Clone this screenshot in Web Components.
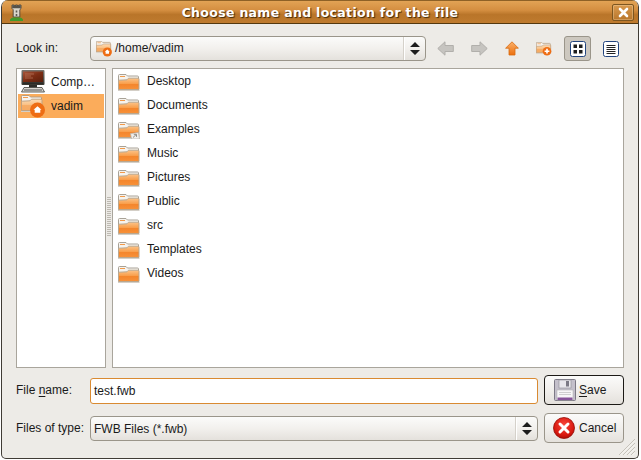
<!DOCTYPE html>
<html><head><meta charset="utf-8"><style>
html,body{margin:0;padding:0;background:#fff;}
body{font:12px "Liberation Sans",sans-serif;color:#1a1a1a;width:641px;height:460px;overflow:hidden}
</style></head><body>
<x-window heading="Choose name and location for the file">
  <x-row>
    <x-label w="74" style="padding-bottom:2px">Look in:</x-label>
    <x-combo w="336" h="25" path><x-folder slot="icon" kind="small"></x-folder><span style="padding-bottom:2px">/home/vadim</span></x-combo>
    <x-toolbar></x-toolbar>
  </x-row>
  <x-panes></x-panes>
  <x-form></x-form>
</x-window>
<script>
let uid=0;
/* Base folder drawn in a 22x17 box; `pale` is the tinted variant */
const folderBody=(pale)=>{
  const id='f'+(++uid);
  const stops=pale
    ?'<stop offset="0" stop-color="#fddcb6"/><stop offset=".5" stop-color="#f9c084"/><stop offset=".56" stop-color="#f6ac66"/><stop offset="1" stop-color="#f6aa62"/>'
    :'<stop offset="0" stop-color="#fcc48a"/><stop offset=".48" stop-color="#f99f4c"/><stop offset=".56" stop-color="#f4862c"/><stop offset="1" stop-color="#f7923a"/>';
  return `<defs><linearGradient id="${id}" x1="0" y1="0" x2="0" y2="1">${stops}</linearGradient></defs>
  <path d="M.5 15V1.500Q.5.5 1.500.5H8L9.500 2H19.500Q20.500 2 20.500 3V15Z" fill="#f6f3ee" stroke="${pale?'#b59c80':'#a8a297'}"/>
  <path d="M2 2.500h5" stroke="#f29a4a" stroke-width="1"/>
  <path d="M.5 15.500V7Q.5 6.200 1.300 6.200L9 5.800 10.500 4.200H20Q21 4.200 21 5.200V15.500Z" fill="url(#${id})" stroke="${pale?'#c0a282':'#b9a78f'}" stroke-width="1"/>
  <path d="M0 16.500h21.500" stroke="#d4cfc7" stroke-width="1"/>`;
};
const FOLDERS={
  plain:()=>`<svg width="22" height="17" viewBox="0 0 22 17">${folderBody(false)}</svg>`,
  link:()=>`<svg width="22" height="17" viewBox="0 0 22 17">${folderBody(false)}<path d="M12.500 11.500l8-1 1 6.500h-8z" fill="#f1efec" stroke="#b5b2ac" stroke-width=".7"/><path d="M15 15.500l3-2.800M15.800 12.300h2.700v2.600" stroke="#8f8c86" fill="none" stroke-width="1"/></svg>`,
  home:()=>`<svg width="24" height="24" viewBox="0 0 24 24"><g transform="translate(0 1)">${folderBody(true)}</g><circle cx="16.500" cy="16" r="7.500" fill="#ee6d14"/><path d="M16.500 12.200l-4 3.500h1.200v3h5.600v-3h1.200z" fill="#fff"/></svg>`,
  small:()=>`<svg width="18" height="16" viewBox="0 0 18 16"><g transform="scale(.7)">${folderBody(true)}</g><circle cx="11.300" cy="11" r="4.600" fill="#ee6d14"/><path d="M11.300 8.600l-2.500 2.200h.8v1.900h3.400v-1.900h.8z" fill="#fff"/></svg>`,
  add:()=>`<svg width="16" height="14" viewBox="0 0 16 14"><g transform="scale(.7)">${folderBody(true)}</g><circle cx="11" cy="9.200" r="4.300" fill="#ee6d14"/><path d="M11 6.800v4.800M8.600 9.200h4.800" stroke="#fff" stroke-width="1.600"/></svg>`
};
function def(name,html){customElements.define(name,class extends HTMLElement{
  connectedCallback(){ if(this.shadowRoot)return; const r=this.attachShadow({mode:'open'}); r.innerHTML=typeof html==='function'?html(this):html;}
});}
def('x-folder',el=>{const k=el.getAttribute('kind')||'plain';
  return `<style>:host{display:inline-flex;flex:none;${k==='plain'||k==='link'?'margin-top:2px;':''}}svg{display:block}</style>${FOLDERS[k]()}`});
def('x-window',el=>`<style>
 :host{display:flex;flex-direction:column;width:638px;height:459px;margin-left:1px;box-sizing:border-box;position:relative;background:#edebe7;
  border:1px solid #3f3b35;border-top:0;border-radius:7px 7px 5px 5px;overflow:hidden}
 .bar{height:24px;box-sizing:border-box;flex:none;display:flex;align-items:center;justify-content:center;position:relative;
  background:linear-gradient(#e2a355 0,#d48e40 42%,#b97529 62%,#bf7b2f 100%);border-top:1px solid #8e6126;border-bottom:1px solid #54380f;
  color:#fff;font:bold 12.5px "DejaVu Sans",sans-serif;letter-spacing:.32px;text-shadow:1px 1px 1px #3f2808}
 .tower{position:absolute;left:7px;top:3px}
 .close{position:absolute;right:4px;top:3px;width:22px;height:17px;box-sizing:border-box;border:1px solid #7d5620;border-radius:2px;background:linear-gradient(#d8994e,#b9772c);box-shadow:inset 0 0 0 1px rgba(255,235,200,.3);display:flex;align-items:center;justify-content:center}
 .body{flex:1;display:flex;flex-direction:column;padding:12px 14px 15px 14px;min-height:0}
 .grip{position:absolute;right:3px;bottom:3px}
 </style>
 <div class="bar">
  <svg class="tower" width="15" height="18" viewBox="0 0 15 18"><path d="M3 1h2.200v1.500H6.500V1h2v1.500h1.300V1H12v3.500l-1.200 1.200V13H4.200V5.700L3 4.500z" fill="#d9d6cb" stroke="#3b3a32" stroke-width=".8"/><path d="M3.200 1.300h8.600v3H3.200z" fill="#55524a"/><path d="M6.700 6.500h1.600v2H6.700zM6.700 10h1.600v2H6.700z" fill="#5b5a52"/><path d="M1 15.500q2-2.500 3.500-2h6q2-.5 3.500 2v1.500H1z" fill="#3f9a2c"/></svg>
  <span>${el.getAttribute('heading')}</span>
  <div class="close"><svg width="11" height="11" viewBox="0 0 11 11"><path d="M2 2l7 7M9 2L2 9" stroke="#fff" stroke-width="2.600" stroke-linecap="round"/></svg></div>
 </div>
 <div class="body"><slot></slot></div>
 <svg class="grip" width="17" height="17" viewBox="0 0 17 17"><path d="M17 1L1 17M17 5L5 17M17 9L9 17M17 13L13 17" stroke="#c6c2ba" stroke-width="1"/><path d="M17 2.500L2.500 17M17 6.500L6.500 17M17 10.500L10.500 17M17 14.500L14.500 17" stroke="#fbfaf8" stroke-width=".8"/></svg>`);
def('x-row',`<style>:host{display:flex;align-items:center;height:25px;flex:none}</style><slot></slot>`);
def('x-label',el=>`<style>:host{display:block;flex:none;${el.getAttribute('w')?'width:'+el.getAttribute('w')+'px;':''}color:#1a1a1a;box-sizing:border-box}u{text-underline-offset:2px}</style><slot></slot>`);
def('x-combo',el=>`<style>
 :host{display:flex;flex:none;align-items:center;box-sizing:border-box;width:${el.getAttribute('w')}px;height:${el.getAttribute('h')}px;border:1px solid #9a958a;border-radius:4px;background:linear-gradient(#fbfbfa 0,#f2f0ed 50%,#e4e1dc 100%);padding-left:${el.hasAttribute('path')?'5px':'3px'}}
 .t{flex:1;display:flex;align-items:center;gap:1px}
 .sep{width:1px;align-self:stretch;background:#d5d1ca;box-shadow:1px 0 0 #fff}
 .arr{width:21px;display:flex;justify-content:center}
 </style><span class="t"><slot name="icon"></slot><slot></slot></span><span class="sep"></span>
 <span class="arr"><svg width="10" height="13" viewBox="0 0 10 13"><path d="M5 0L10 5H0zM5 13L0 8h10z" fill="#1d1d1d"/></svg></span>`);
const ARROW=(d)=>`<svg width="17" height="15" viewBox="0 0 17 15"><path d="${d}" fill="#c6c4c0" stroke="#b1afab" stroke-linejoin="round"/></svg>`;
def('x-toolbar',`<style>:host{display:flex;align-items:center;flex:none;height:25px}
 .i{display:flex;justify-content:center;align-items:center;height:25px;flex:none}
 .tg{width:27px;height:25px;box-sizing:border-box;border-radius:3px;display:flex;align-items:center;justify-content:center;flex:none}
 .on{background:#cdc8bf;border:1px solid #9a958a}
 svg{display:block}
 </style>
 <div class="i" style="margin-left:3px;width:33px">${ARROW('M.8 7.500L8 .8v3.700h8.300v6H8v3.700z')}</div>
 <div class="i" style="width:34px">${ARROW('M16.200 7.500L9 .8v3.700H.7v6H9v3.700z')}</div>
 <div class="i" style="width:32px"><svg width="14" height="15" viewBox="0 0 14 15"><defs><linearGradient id="up" x1="0" y1="0" x2="0" y2="1"><stop offset="0" stop-color="#fbb06a"/><stop offset="1" stop-color="#ec700e"/></linearGradient></defs><path d="M7 .8L13.400 7.200H10V14H4V7.200H.6z" fill="url(#up)" stroke="#d8690f" stroke-width=".8"/></svg></div>
 <div class="i" style="width:32px">${FOLDERS.add()}</div>
 <div class="tg on" style="margin-left:4px"><svg width="16" height="16" viewBox="0 0 16 16"><rect x=".5" y=".5" width="15" height="15" rx="2" fill="#fff" stroke="#23457f"/><rect x="3.500" y="3.500" width="3.500" height="3.500" fill="#1d1d1d"/><rect x="9" y="3.500" width="3.500" height="3.500" fill="#1d1d1d"/><rect x="3.500" y="9" width="3.500" height="3.500" fill="#1d1d1d"/><rect x="9" y="9" width="3.500" height="3.500" fill="#1d1d1d"/></svg></div>
 <div class="tg" style="margin-left:6px"><svg width="16" height="16" viewBox="0 0 16 16"><rect x=".5" y=".5" width="15" height="15" rx="2" fill="#fff" stroke="#23457f"/><path d="M3.500 4.500h9M3.500 6.500h9M3.500 8.500h9M3.500 10.500h9M3.500 12.500h9" stroke="#222"/></svg></div>`);
def('x-list',el=>`<style>:host{display:block;box-sizing:border-box;background:#fff;border:1px solid #a9a59c;width:${el.getAttribute('w')||'auto'};padding:${el.getAttribute('pad')||'0'};flex:${el.getAttribute('w')?'none':'1'}}</style><slot></slot>`);
def('x-item',el=>`<style>:host{display:flex;align-items:center;height:24px;gap:${el.getAttribute('gap')||'6px'};padding-left:${el.getAttribute('pl')||'0'};${el.hasAttribute('sel')?'background:#fbac5b;':''}white-space:nowrap}</style><slot name="i"></slot><slot></slot>`);
const C=`<svg slot="i" width="24" height="24" viewBox="0 0 24 24" style="display:block"><defs><linearGradient id="scr" x1="0" y1="0" x2="1" y2="1"><stop offset="0" stop-color="#a8563a"/><stop offset=".5" stop-color="#7c2d14"/><stop offset="1" stop-color="#5a1f0c"/></linearGradient><linearGradient id="mon" x1="0" y1="0" x2="0" y2="1"><stop offset="0" stop-color="#77746e"/><stop offset="1" stop-color="#38362f"/></linearGradient></defs><rect x=".5" y="0" width="23" height="15" rx="1" fill="url(#mon)"/><rect x="2" y="1.500" width="20" height="10.500" fill="url(#scr)"/><path d="M4 4h9M4 6h6M4 8h8" stroke="#c98a6e" stroke-width=".8" opacity=".7"/><rect x="2" y="12.500" width="20" height="1.500" fill="#2c2b27"/><rect x="8" y="15" width="8" height="2.500" fill="#2e2d29"/><path d="M3 17.500h18l2.500 4.500H.5z" fill="#d8d6d0" stroke="#3e3d38" stroke-width=".8"/><path d="M3 20h18" stroke="#555" stroke-width="1"/></svg>`;
def('x-panes',`<style>:host{display:flex;flex:1;margin-top:7px;min-height:0;position:relative;gap:6px}
 .grip{position:absolute;left:91px;top:129px;width:4px;height:40px;background:repeating-linear-gradient(#bdb9b1 0 1px,#edebe7 1px 2px)}
 </style>
 <x-list w="90px" pad="1px 1px 0 1px">
  <x-item gap="6px" pl="3px">${C}Comp…</x-item>
  <x-item sel gap="6px" pl="3px"><x-folder slot="i" kind="home"></x-folder>vadim</x-item>
 </x-list>
 <div class="grip"></div>
 <x-list pad="0 0 0 5px">
  ${[['Desktop'],['Documents'],['Examples','link'],['Music'],['Pictures'],['Public'],['src'],['Templates'],['Videos']].map(([n,k])=>`<x-item gap="7px"><x-folder slot="i" ${k?`kind="${k}"`:''}></x-folder>${n}</x-item>`).join('')}
 </x-list>`);
def('x-btn',el=>`<style>:host{display:flex;flex:none;box-sizing:border-box;width:80px;height:30px;align-items:center;gap:${el.getAttribute('gap')}px;padding-left:${el.getAttribute('pl')}px;border:1px solid ${el.hasAttribute('def')?'#1c1a16':'#9a958a'};border-radius:4px;background:linear-gradient(#fbfbfa,#f1efec 50%,#e4e1dc)}u{text-underline-offset:2px}svg{display:block}</style><slot name="i"></slot><slot></slot>`);
def('x-form',`<style>:host{display:grid;grid-template-columns:74px 448px 86px;row-gap:8px;margin-top:7px;flex:none;align-items:center}
 .e{box-sizing:border-box;height:26px;border:1px solid #d98a32;border-radius:3px;background:#fff;display:flex;align-items:center;padding-left:3px;width:448px;align-self:start;margin-top:3px}
 x-combo{align-self:start;margin-top:3px}
 x-btn{margin-left:6px}
 u{text-underline-offset:2px}
 </style>
 <x-label>File <u>n</u>ame:</x-label>
 <div class="e">test.fwb</div>
 <x-btn def pl="9" gap="3"><svg slot="i" width="22" height="22" viewBox="0 0 22 22"><rect x=".5" y=".5" width="21" height="21" rx="1" fill="#c4c0cb" stroke="#7c7985"/><rect x="5" y="1" width="12" height="8" fill="#e9e7ec" stroke="#8d8a94" stroke-width=".6"/><rect x="12" y="2" width="3" height="5.500" fill="#7c7985"/><rect x="3" y="11" width="16" height="10" fill="#f8f7f8" stroke="#aaa" stroke-width=".5"/><rect x="3.500" y="18.500" width="15" height="2.500" fill="#87569a"/><path d="M5 13.500h12M5 15.500h12" stroke="#cfcfcf"/></svg><span><u>S</u>ave</span></x-btn>
 <x-label>Files of type:</x-label>
 <x-combo w="448" h="25">FWB Files (*.fwb)</x-combo>
 <x-btn pl="8" gap="4"><svg slot="i" width="22" height="22" viewBox="0 0 22 22"><defs><radialGradient id="rd" cx=".5" cy=".35" r=".7"><stop offset="0" stop-color="#f8473b"/><stop offset=".7" stop-color="#d8180f"/><stop offset="1" stop-color="#9d0e06"/></radialGradient></defs><circle cx="11" cy="11" r="10.500" fill="url(#rd)" stroke="#940d06" stroke-width=".8"/><path d="M7 7l8 8M15 7l-8 8" stroke="#fff" stroke-width="3" stroke-linecap="round"/></svg><span>Cancel</span></x-btn>`);
</script></body></html>
